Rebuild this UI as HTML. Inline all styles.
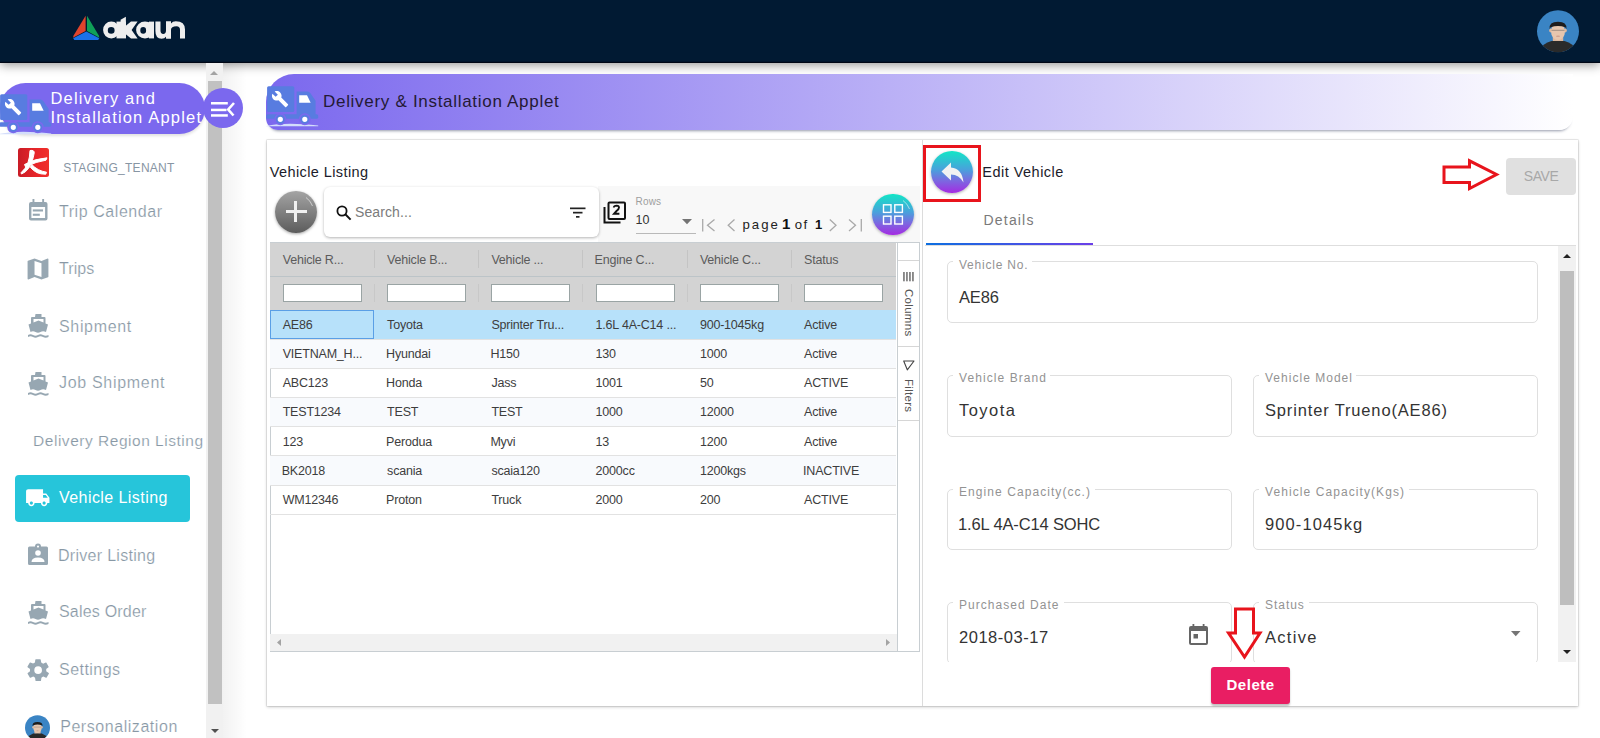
<!DOCTYPE html>
<html><head><meta charset="utf-8">
<style>
*{box-sizing:border-box;margin:0;padding:0}
html,body{width:1600px;height:738px;overflow:hidden;background:#fff;font-family:"Liberation Sans",sans-serif}
body{position:relative}
.a{position:absolute}
.t{position:absolute;white-space:nowrap;line-height:1}
svg{position:absolute;overflow:visible}
</style></head><body>
<!-- ================= HEADER ================= -->
<div class="a" style="left:0;top:0;width:1600px;height:62.6px;background:#011a33;box-shadow:inset 0 -1.2px 0 #000716,0 2px 10px rgba(0,0,0,.42)"></div>
<svg style="left:0;top:0" width="200" height="50" viewBox="0 0 200 50">
  <polygon points="85.6,15.8 85.6,31 73,37.8 73.6,35.6" fill="#e0442c"/>
  <polygon points="87,15.8 98.8,35.6 99.4,37.8 87,31" fill="#0fa058"/>
  <polygon points="73.2,38.3 86.3,31.4 99.3,38.3 98.2,40 74.3,40" fill="#1b72e8"/>
  <g fill="#eeeeee">
    <path fill-rule="evenodd" d="M111.3 21.6 A8.2 8.4 0 1 0 111.3 38.4 A8.2 8.4 0 1 0 111.3 21.6Z M111.2 27.1 A3.4 3.3 0 1 1 111.2 33.7 A3.4 3.3 0 1 1 111.2 27.1Z"/>
    <rect x="116.5" y="21.6" width="9.5" height="16.8"/>
    <polygon points="120.6,22 120.6,19.8 125.9,16.8 125.9,22"/>
    <polygon points="125.5,26 131,21.6 137.6,21.6 131.6,30 137.6,38.4 131,38.4 125.5,34"/>
    <path fill-rule="evenodd" d="M145 21.6 A8.9 8.4 0 1 0 145 38.4 A8.9 8.4 0 1 0 145 21.6Z M143.2 27.1 A2.9 3.3 0 1 1 143.2 33.7 A2.9 3.3 0 1 1 143.2 27.1Z"/>
    <rect x="149" y="21.6" width="5" height="16.8"/>
    <path d="M155.4 21.6 H160.5 V30.5 Q160.5 33.9 163.2 33.9 Q166 33.9 166 30.5 V21.6 H171 V38.4 H166.2 V36.6 Q164.6 38.8 161.6 38.8 Q155.4 38.8 155.4 31 Z"/>
    <path d="M166 38.4 V21.6 H171 V23.4 Q172.6 21.2 175.8 21.2 Q185 21.2 185 29.5 V38.4 H180 V29.8 Q180 26.2 176.5 26.2 Q171 26.2 171 29.8 V38.4 Z"/>
  </g>
</svg>
<svg style="left:1537px;top:9.5px" width="42" height="42.5" viewBox="0 0 42 42.5">
  <defs><clipPath id="avc"><circle cx="21" cy="21.25" r="21"/></clipPath></defs>
  <g id="avatar" clip-path="url(#avc)">
    <rect x="0" y="0" width="42" height="42.5" fill="#3a84c4"/>
    <ellipse cx="21" cy="44" rx="19" ry="13.8" fill="#2a2a2a"/>
    <rect x="15.8" y="24" width="10.4" height="7" fill="#dcb89f"/>
    <ellipse cx="13.8" cy="20.5" rx="1.6" ry="2" fill="#dcb89f"/>
    <ellipse cx="28.2" cy="20.5" rx="1.6" ry="2" fill="#dcb89f"/>
    <ellipse cx="21" cy="21.5" rx="7" ry="8.6" fill="#e6c6ae"/>
    <path d="M12.6 19 Q11.8 11.8 21 11.8 Q30.2 11.8 29.4 19 L28.3 17.2 Q21 14.8 13.7 17.2 Z" fill="#1d1d1d"/>
    <path d="M14.5 20.3 H27.5" stroke="#555" stroke-width=".7" opacity=".7"/>
    <ellipse cx="21" cy="26.3" rx="2.2" ry=".8" fill="#c9988a" opacity=".8"/>
  </g>
</svg>

<!-- ================= SIDEBAR ================= -->
<div class="a" style="left:223.3px;top:62px;width:24px;height:676px;background:linear-gradient(90deg,rgba(0,0,0,.05),rgba(0,0,0,0))"></div>
<div class="a" style="left:206px;top:63px;width:17.3px;height:675px;background:#f1f1f1"></div>
<div class="a" style="left:208px;top:81.2px;width:14px;height:622.6px;background:#c1c1c1"></div>
<svg style="left:209px;top:70px" width="10" height="6"><polygon points="1,5 5,1 9,5" fill="#a3a3a3"/></svg>
<svg style="left:210px;top:728px" width="10" height="6"><polygon points="1,1 5,5 9,1" fill="#505050"/></svg>

<div class="a" style="left:0;top:83px;width:205px;height:51px;background:#7b68ee;border-radius:26px;box-shadow:0 2px 3px rgba(0,0,0,.12)"></div>
<div class="a" style="left:203px;top:88.4px;width:40px;height:40px;background:#7b68ee;border-radius:50%"></div>
<svg style="left:211px;top:101px" width="25" height="17" viewBox="0 0 25 17">
  <rect x="0" y="1" width="16.8" height="2.5" fill="#fff"/>
  <rect x="0" y="7.7" width="15.5" height="2.5" fill="#fff"/>
  <rect x="0" y="13.2" width="16.8" height="2.5" fill="#fff"/>
  <path d="M23 2 L17.2 8.5 L22.5 14.5" fill="none" stroke="#fff" stroke-width="2.6"/>
</svg>
<!-- truck icon in pill -->
<svg style="left:-0.7px;top:94.4px" width="53" height="41" viewBox="0 0 53 41"><g id="truck">
  <path d="M0.3 40 Q20 35.5 52.2 39.6 L52.2 40.2 L0.3 40.2Z" fill="#d3ddfb"/>
  <rect x="1.1" y="0.3" width="27.2" height="25.8" rx="1.5" fill="#587ce0"/>
  <path d="M30.6 5.6 H41.5 Q43.3 5.6 44.4 7.2 L49.6 14.8 V30.5 H30.6 Z" fill="#587ce0"/>
  <rect x="0.3" y="28.3" width="51.9" height="4.5" rx="1.6" fill="#587ce0"/>
  <circle cx="14.3" cy="33.3" r="6" fill="#7b68ee"/>
  <circle cx="38.8" cy="33.3" r="6" fill="#7b68ee"/>
  <circle cx="14.3" cy="33.3" r="3.55" fill="#fff" stroke="#587ce0" stroke-width="1.9"/>
  <circle cx="38.8" cy="33.3" r="3.55" fill="#fff" stroke="#587ce0" stroke-width="1.9"/>
  <path d="M33.2 9.3 H41 L44.7 16.8 H33.2 Z" fill="#fff"/>
  <g transform="translate(5.2 4.2) scale(0.74)"><path d="M22.7 19l-9.1-9.1c.9-2.3.4-5-1.5-6.9-2-2-5-2.4-7.4-1.3L9 6 6 9 1.6 4.7C.4 7.1.9 10.1 2.9 12.1c1.9 1.9 4.6 2.4 6.9 1.5l9.1 9.1c.4.4 1 .4 1.4 0l2.3-2.3c.5-.4.5-1.1.1-1.4z" fill="#fff"/></g>
</g></svg>
<!-- tenant logo -->
<div class="a" style="left:18px;top:148.4px;width:31px;height:28.8px;background:linear-gradient(90deg,#c91c26,#e8262a 60%,#f0302a);border-radius:2.5px"></div>
<svg style="left:18px;top:148.4px" width="31" height="29" viewBox="0 0 31 29" fill="#fff" stroke="#fff" stroke-width="1" stroke-linejoin="round">
  <path d="M12 2.5 Q16.5 1.8 16.2 5 Q14.5 15 10.5 20.5 Q7.5 24.5 3.5 26 L3 24.8 Q7.5 21 10 14.5 Q11.8 9.5 12 2.5Z"/>
  <path d="M6.5 16.5 Q17 10.5 29 9.8 L28 12.2 Q18.5 13.5 7.5 18.8Z"/>
  <path d="M13.8 16.5 Q19.5 22.8 28.5 24.2 L27.8 26.2 Q18 26.5 12.3 19.2Z"/>
</svg>
<!-- menu icons -->
<svg style="left:28.5px;top:199px" width="19" height="22" viewBox="0 0 19 22" fill="#97a7b2">
  <path fill-rule="evenodd" d="M3.5 0 h1.9 v3 h7.8 v-3 h1.9 v3 h1.4 a2 2 0 0 1 2 2 v14.4 a2 2 0 0 1 -2 2 h-14.5 a2 2 0 0 1 -2 -2 v-14.4 a2 2 0 0 1 2 -2 h1.5z M2.4 8 v11.1 h13.7 v-11.1z"/>
  <rect x="3.8" y="10.4" width="10.2" height="2.1"/><rect x="3.8" y="14.7" width="7" height="2.1"/>
</svg>
<svg style="left:27px;top:258px" width="22" height="22" viewBox="2.5 2.5 19 19" fill="#97a7b2"><path d="M20.5 3l-.16.03L15 5.1 9 3 3.36 4.9c-.21.07-.36.25-.36.48V20.5c0 .28.22.5.5.5l.16-.03L9 18.9l6 2.1 5.64-1.9c.21-.07.36-.25.36-.48V3.5c0-.28-.22-.5-.5-.5zM15 19l-6-2.11V5l6 2.11V19z"/></svg>
<!-- ship icons -->
<svg style="left:27.5px;top:314px" width="21" height="24" viewBox="0 0 21 24" fill="#97a7b2"><path id="ship" d="M7.5 0 h6 v3 h3 a1 1 0 0 1 1 1 v5.5 l2.5 1 l-2 7.5 q-3 -1.5 -5.5 0 q-2.5 1.5 -5 0 q-2.5 -1.5 -5 0 l-2 -7.5 l2.5 -1 v-5.5 a1 1 0 0 1 1 -1 h3z M5.5 5 v3.5 l5 -2 l5 2 v-3.5z M0 21 q2.5 -1.6 5 0 q2.5 1.6 5 0 q2.5 -1.6 5 0 q2.5 1.6 5.5 0 v2 q-3 1.6 -5.5 0 q-2.5 -1.6 -5 0 q-2.5 1.6 -5 0 q-2.5 -1.6 -5 0z"/></svg>
<svg style="left:27.5px;top:372px" width="21" height="24" viewBox="0 0 21 24" fill="#97a7b2"><use href="#ship"/></svg>
<svg style="left:27.5px;top:601px" width="21" height="24" viewBox="0 0 21 24" fill="#97a7b2"><use href="#ship"/></svg>
<!-- active item -->
<div class="a" style="left:15px;top:475px;width:175px;height:47px;background:#26c5da;border-radius:4px"></div>
<svg style="left:25.1px;top:484.8px" width="25.5" height="25.5" viewBox="0 0 24 24" fill="#fff"><path d="M20 8h-3V4H3c-1.1 0-2 .9-2 2v11h2c0 1.66 1.34 3 3 3s3-1.34 3-3h6c0 1.66 1.34 3 3 3s3-1.34 3-3h2v-5l-3-4zM6 18.5c-.83 0-1.5-.67-1.5-1.5s.67-1.5 1.5-1.5 1.5.67 1.5 1.5-.67 1.5-1.5 1.5zm13.5-9l1.96 2.5H17V9.5h2.5zm-1.5 9c-.83 0-1.5-.67-1.5-1.5s.67-1.5 1.5-1.5 1.5.67 1.5 1.5-.67 1.5-1.5 1.5z"/></svg>
<!-- driver icon -->
<svg style="left:28px;top:544px" width="20" height="21" viewBox="0 0 20 21" fill="#97a7b2">
  <path d="M1.5 2.5 h5.5 a3 3 0 0 1 6 0 h5.5 a1.5 1.5 0 0 1 1.5 1.5 v15.5 a1.5 1.5 0 0 1 -1.5 1.5 h-17 a1.5 1.5 0 0 1 -1.5 -1.5 v-15.5 a1.5 1.5 0 0 1 1.5 -1.5z M10 1.5 a1 1 0 1 0 0.01 0z"/>
  <circle cx="10" cy="9" r="2.8" fill="#fff"/>
  <path d="M3.5 18 q0 -4.5 6.5 -4.5 q6.5 0 6.5 4.5z" fill="#fff"/>
</svg>
<!-- gear -->
<svg style="left:24.9px;top:657.3px" width="26.25" height="26.25" viewBox="0 0 24 24" fill="#97a7b2">
  <path d="M19.4 13a7.6 7.6 0 0 0 0-2l2.1-1.6a.5.5 0 0 0 .1-.6l-2-3.5a.5.5 0 0 0-.6-.2l-2.5 1a7.3 7.3 0 0 0-1.7-1L14.4 2.4a.5.5 0 0 0-.5-.4h-4a.5.5 0 0 0-.5.4L9.1 5a7.3 7.3 0 0 0-1.7 1l-2.5-1a.5.5 0 0 0-.6.2l-2 3.5a.5.5 0 0 0 .1.6L4.6 11a7.6 7.6 0 0 0 0 2l-2.1 1.6a.5.5 0 0 0-.1.6l2 3.5a.5.5 0 0 0 .6.2l2.5-1a7.3 7.3 0 0 0 1.7 1l.4 2.7a.5.5 0 0 0 .5.4h4a.5.5 0 0 0 .5-.4l.4-2.7a7.3 7.3 0 0 0 1.7-1l2.5 1a.5.5 0 0 0 .6-.2l2-3.5a.5.5 0 0 0-.1-.6zM12 15.5a3.5 3.5 0 1 1 0-7 3.5 3.5 0 0 1 0 7z"/>
</svg>
<!-- personalization avatar -->
<svg style="left:24.8px;top:715px" width="25" height="25.3" viewBox="0 0 42 42.5"><use href="#avatar"/></svg>

<!-- ================= MAIN ================= -->
<div class="a" style="left:266px;top:74px;width:1307px;height:56px;border-radius:28px 0 14px 12px;background:linear-gradient(90deg,#7b68ee 0%,#ffffff 100%);box-shadow:0 4px 3px -3px rgba(60,70,100,.55)"></div>
<!-- truck in applet header -->
<svg style="left:266px;top:86px" width="53" height="41" viewBox="0 0 53 41"><use href="#truck"/></svg>
<!-- card -->
<div class="a" style="left:266.5px;top:140px;width:1311.5px;height:566px;background:#fff;box-shadow:0 0 0 0.6px rgba(0,0,0,.12),0 1px 3px rgba(0,0,0,.22)"></div>

<!-- toolbar bg -->
<div class="a" style="left:598px;top:186px;width:322px;height:56px;background:#f8f8f8"></div>
<!-- add button -->
<div class="a" style="left:275px;top:191px;width:42px;height:42px;border-radius:50%;background:linear-gradient(180deg,#a4a4a4,#5c5c5c);box-shadow:0 1px 3px rgba(0,0,0,.35)"></div>
<div class="a" style="left:285.5px;top:210.2px;width:21px;height:3px;background:#f0f0f0"></div>
<div class="a" style="left:294.4px;top:201.2px;width:3px;height:21px;background:#f0f0f0"></div>
<!-- search box -->
<div class="a" style="left:324px;top:187px;width:275px;height:50px;background:#fff;border-radius:6px;box-shadow:0 1px 3px rgba(0,0,0,.3)"></div>
<svg style="left:336px;top:205px" width="16" height="16" viewBox="0 0 16 16"><circle cx="6" cy="6" r="4.6" fill="none" stroke="#111" stroke-width="1.8"/><path d="M9.3 9.3 L14.6 14.6" stroke="#111" stroke-width="2"/></svg>
<svg style="left:570px;top:207px" width="16" height="12" viewBox="0 0 16 12"><rect x="0" y="0.5" width="15.5" height="1.7" fill="#222"/><rect x="3" y="4.8" width="9.5" height="1.7" fill="#222"/><rect x="6" y="9" width="3.5" height="1.7" fill="#222"/></svg>
<!-- library books icon -->
<svg style="left:603px;top:201px" width="24" height="24" viewBox="0 0 24 24" fill="none" stroke="#111" stroke-width="2">
  <path d="M1.5 6 V21.5 H17.5"/>
  <rect x="5.5" y="1.5" width="16.5" height="16.5" rx="1"/>
  <path d="M10.8 6.5 Q11 4.6 13.6 4.6 Q16 4.7 16 6.5 Q16 8 13.5 10 L11 12.8 H16.4" stroke-width="1.9"/>
</svg>
<!-- rows select -->
<div class="a" style="left:635.5px;top:233.3px;width:60.5px;height:1px;background:#b9b9b9"></div>
<svg style="left:681.5px;top:218.5px" width="10" height="6"><polygon points="0,0 10,0 5,5.3" fill="#747474"/></svg>
<!-- pager icons -->
<svg style="left:702px;top:219px" width="160" height="13" viewBox="0 0 160 13" fill="none" stroke="#a9a9a9" stroke-width="1.3">
  <path d="M0.7 0 V12.5"/><path d="M12.5 0.5 L5.5 6.2 L12.5 12"/>
  <path d="M32.5 0.5 L26.2 6.2 L32.5 12"/>
  <path d="M127.8 0.5 L134 6.2 L127.8 12"/>
  <path d="M147 0.5 L153.5 6.2 L147 12"/><path d="M159.3 0 V12.5"/>
</svg>
<!-- grid toggle button -->
<div class="a" style="left:872px;top:193.5px;width:41.8px;height:41.8px;border-radius:50%;background:linear-gradient(180deg,#12e6c6 0%,#4aa0dc 45%,#7a6ae0 70%,#a42be2 100%);box-shadow:0 1px 3px rgba(0,0,0,.3)"></div>
<svg style="left:882px;top:203px" width="22" height="22" viewBox="0 0 22 22" fill="none" stroke="#fff" stroke-width="1.4">
  <rect x="1.5" y="1.8" width="7.5" height="7.6"/><rect x="12.8" y="1.8" width="7.6" height="7.6"/>
  <rect x="1.5" y="13.2" width="7.5" height="7.8"/><rect x="12.8" y="13.2" width="7.6" height="7.8"/>
</svg>
<svg style="left:872px;top:193.5px" width="42" height="42" viewBox="0 0 42 42" fill="none" stroke="rgba(255,255,255,.55)" stroke-width="1"><path d="M31 6.5 A17.5 17.5 0 0 1 37.5 15"/></svg>
<svg style="left:275px;top:191px" width="42" height="42" viewBox="0 0 42 42" fill="none" stroke="rgba(255,255,255,.55)" stroke-width="1"><path d="M31 6.5 A17.5 17.5 0 0 1 37.5 15"/></svg>
<svg style="left:931.3px;top:151.4px" width="42" height="42" viewBox="0 0 42 42" fill="none" stroke="rgba(255,255,255,.55)" stroke-width="1"><path d="M31 6.5 A17.5 17.5 0 0 1 37.5 15"/></svg>

<!-- grid -->
<div class="a" style="left:269.5px;top:242px;width:650px;height:410px;border:1px solid #c8ced2;background:#fff"></div>
<div class="a" style="left:270px;top:242.5px;width:626px;height:67.5px;background:#d3d3d3"></div>
<div class="a" style="left:270px;top:276px;width:626px;height:1px;background:#bcc4c8"></div>
<!-- header col separators -->
<div class="a" style="left:373.5px;top:250px;width:1px;height:18px;background:#c4c4c4"></div>
<div class="a" style="left:478px;top:250px;width:1px;height:18px;background:#c4c4c4"></div>
<div class="a" style="left:582.3px;top:250px;width:1px;height:18px;background:#c4c4c4"></div>
<div class="a" style="left:686.6px;top:250px;width:1px;height:18px;background:#c4c4c4"></div>
<div class="a" style="left:790.8px;top:250px;width:1px;height:18px;background:#c4c4c4"></div>
<div class="a" style="left:373.5px;top:284px;width:1px;height:18px;background:#c8c8c8"></div>
<div class="a" style="left:478px;top:284px;width:1px;height:18px;background:#c8c8c8"></div>
<div class="a" style="left:582.3px;top:284px;width:1px;height:18px;background:#c8c8c8"></div>
<div class="a" style="left:686.6px;top:284px;width:1px;height:18px;background:#c8c8c8"></div>
<div class="a" style="left:790.8px;top:284px;width:1px;height:18px;background:#c8c8c8"></div>
<!-- filter inputs -->
<div class="a" style="left:282.7px;top:283.7px;width:79px;height:18px;background:#fff;border:1px solid #9aa4a4"></div>
<div class="a" style="left:387.1px;top:283.7px;width:79px;height:18px;background:#fff;border:1px solid #9aa4a4"></div>
<div class="a" style="left:491.4px;top:283.7px;width:79px;height:18px;background:#fff;border:1px solid #9aa4a4"></div>
<div class="a" style="left:595.6px;top:283.7px;width:79px;height:18px;background:#fff;border:1px solid #9aa4a4"></div>
<div class="a" style="left:699.9px;top:283.7px;width:79px;height:18px;background:#fff;border:1px solid #9aa4a4"></div>
<div class="a" style="left:804.1px;top:283.7px;width:79px;height:18px;background:#fff;border:1px solid #9aa4a4"></div>
<!-- rows -->
<div class="a" style="left:270px;top:310px;width:626px;height:29px;background:#b7e1fa"></div>
<div class="a" style="left:270px;top:310px;width:104px;height:29px;border:1px solid #5a9fe6"></div>
<div class="a" style="left:270px;top:339px;width:626px;height:29px;background:#f8fafd"></div>
<div class="a" style="left:270px;top:397px;width:626px;height:29px;background:#f8fafd"></div>
<div class="a" style="left:270px;top:455.5px;width:626px;height:29.5px;background:#f8fafd"></div>
<div class="a" style="left:270px;top:338.5px;width:626px;height:1px;background:#e2e2e2"></div>
<div class="a" style="left:270px;top:367.7px;width:626px;height:1px;background:#e2e2e2"></div>
<div class="a" style="left:270px;top:396.9px;width:626px;height:1px;background:#e2e2e2"></div>
<div class="a" style="left:270px;top:426.1px;width:626px;height:1px;background:#e2e2e2"></div>
<div class="a" style="left:270px;top:455.3px;width:626px;height:1px;background:#e2e2e2"></div>
<div class="a" style="left:270px;top:484.5px;width:626px;height:1px;background:#e2e2e2"></div>
<div class="a" style="left:270px;top:513.7px;width:626px;height:1px;background:#e2e2e2"></div>
<!-- h scrollbar -->
<div class="a" style="left:270px;top:633.7px;width:627px;height:17.3px;background:#f1f1f1"></div>
<svg style="left:276px;top:638.5px" width="6" height="8"><polygon points="5,0 5,7 1,3.5" fill="#a3a3a3"/></svg>
<svg style="left:885px;top:638.5px" width="6" height="8"><polygon points="1,0 1,7 5,3.5" fill="#a3a3a3"/></svg>
<!-- side bar -->
<div class="a" style="left:896.5px;top:242.5px;width:1px;height:409px;background:#c8ced2"></div>
<div class="a" style="left:897.5px;top:260px;width:21.5px;height:1px;background:#d6d6d6"></div>
<div class="a" style="left:897.5px;top:346px;width:21.5px;height:1px;background:#d6d6d6"></div>
<div class="a" style="left:897.5px;top:420px;width:21.5px;height:1px;background:#d6d6d6"></div>
<svg style="left:903px;top:272px" width="11" height="10" viewBox="0 0 11 10" fill="#555"><rect x="0.3" y="0" width="1.3" height="9.3"/><rect x="3.3" y="0" width="1.3" height="9.3"/><rect x="6.3" y="0" width="1.3" height="9.3"/><rect x="9.3" y="0" width="1.3" height="9.3"/></svg>
<div class="t" style="left:913.8px;top:289px;font-size:11.5px;color:#555;transform-origin:0 0;transform:rotate(90deg);letter-spacing:.3px">Columns</div>
<svg style="left:903px;top:360px" width="12" height="11" viewBox="0 0 12 11" fill="none" stroke="#444" stroke-width="1.1" stroke-linejoin="round"><path d="M0.7 1 H11 L4.3 9.8 Z"/></svg>
<div class="t" style="left:913.8px;top:379px;font-size:11.5px;color:#555;transform-origin:0 0;transform:rotate(90deg);letter-spacing:.3px">Filters</div>

<!-- ================= RIGHT PANEL ================= -->
<div class="a" style="left:922px;top:140px;width:1px;height:566px;background:#dcdcdc"></div>
<div class="a" style="left:922.8px;top:145.2px;width:58.1px;height:56.9px;border:3.6px solid #e8141c"></div>
<div class="a" style="left:931.3px;top:151.4px;width:41.8px;height:41.8px;border-radius:50%;background:linear-gradient(180deg,#12e6c6 0%,#4aa0dc 45%,#7a6ae0 70%,#a42be2 100%);box-shadow:0 1px 3px rgba(0,0,0,.3)"></div>
<svg style="left:941px;top:162px" width="23" height="21" viewBox="0 0 23 21" fill="#f2f2f2"><path d="M0.5 9.5 L10 0.5 V5.6 Q21 6.5 22.5 20.5 Q18 12.8 10 12.6 V18.5 Z"/></svg>

<svg style="left:1442px;top:159px" width="58" height="32" viewBox="0 0 58 32" fill="none" stroke="#e8141c" stroke-width="3"><path d="M2 8 H27.5 V1.8 L54.5 15.5 L27.5 29.5 V23.5 H2 Z" stroke-linejoin="miter"/></svg>
<div class="a" style="left:1506px;top:158px;width:70px;height:37px;border-radius:4px;background:#e0e0e0"></div>

<!-- tabs -->
<div class="a" style="left:925px;top:245px;width:651px;height:1px;background:#dedede"></div>
<div class="a" style="left:925.5px;top:243px;width:167px;height:2.2px;background:linear-gradient(90deg,#0d6fe0,#6b3fe8)"></div>

<!-- form scroll -->
<div class="a" style="left:1558px;top:246px;width:17.5px;height:416px;background:#f1f1f1"></div>
<div class="a" style="left:1560.2px;top:271px;width:13.7px;height:334px;background:#bebebe"></div>
<svg style="left:1562px;top:253px" width="10" height="6"><polygon points="1,5 5,1 9,5" fill="#222"/></svg>
<svg style="left:1562px;top:649px" width="10" height="6"><polygon points="1,1 5,5 9,1" fill="#222"/></svg>

<!-- fields -->
<div style="position:absolute;left:930px;top:246px;width:628px;height:415.5px;overflow:hidden">
  <div class="a" style="left:16.5px;top:15.3px;width:591px;height:61.6px;border:1px solid #dfdfdf;border-radius:5px"></div>
  <div class="a" style="left:16.5px;top:129px;width:285px;height:61.8px;border:1px solid #dfdfdf;border-radius:5px"></div>
  <div class="a" style="left:322.5px;top:129px;width:285px;height:61.8px;border:1px solid #dfdfdf;border-radius:5px"></div>
  <div class="a" style="left:16.5px;top:242.7px;width:285px;height:61.6px;border:1px solid #dfdfdf;border-radius:5px"></div>
  <div class="a" style="left:322.5px;top:242.7px;width:285px;height:61.6px;border:1px solid #dfdfdf;border-radius:5px"></div>
  <div class="a" style="left:16.5px;top:356px;width:285px;height:61.6px;border:1px solid #dfdfdf;border-radius:5px"></div>
  <div class="a" style="left:322.5px;top:356px;width:285px;height:61.6px;border:1px solid #dfdfdf;border-radius:5px"></div>
</div>
<!-- label gaps -->
<div class="a" style="left:953px;top:258px;width:79px;height:6px;background:#fff"></div>
<div class="a" style="left:953px;top:372px;width:97px;height:6px;background:#fff"></div>
<div class="a" style="left:1259px;top:372px;width:97px;height:6px;background:#fff"></div>
<div class="a" style="left:953px;top:485px;width:142px;height:6px;background:#fff"></div>
<div class="a" style="left:1259px;top:485px;width:150px;height:6px;background:#fff"></div>
<div class="a" style="left:953px;top:599px;width:111px;height:6px;background:#fff"></div>
<div class="a" style="left:1259px;top:599px;width:50px;height:6px;background:#fff"></div>
<!-- calendar icon -->
<svg style="left:1188.5px;top:623.5px" width="19" height="21" viewBox="0 0 19 21" fill="#666">
  <path d="M3.5 0 h1.8 v2 h8.4 v-2 h1.8 v2 h1.5 a2 2 0 0 1 2 2 v15 a2 2 0 0 1 -2 2 h-15 a2 2 0 0 1 -2 -2 v-15 a2 2 0 0 1 2 -2 h1.5z M2 7 v12 h15 v-12z M4.5 10 h4.5 v4.5 h-4.5z"/>
</svg>
<svg style="left:1511px;top:630.5px" width="10" height="6"><polygon points="0,0 9.5,0 4.75,5.2" fill="#757575"/></svg>

<!-- red down arrow -->
<svg style="left:1226px;top:607px" width="37" height="52" viewBox="0 0 37 52" fill="none" stroke="#e8141c" stroke-width="3"><path d="M9.5 2 H27.5 V26 H34 L18.5 50 L2.5 26 H9.5 Z"/></svg>
<!-- delete button -->
<div class="a" style="left:1211px;top:666.5px;width:79px;height:37px;border-radius:3px;background:#e91e63;box-shadow:0 2px 2px rgba(0,0,0,.25)"></div>

<div class="t" style="left:50.50px;top:90.03px;font-size:16.5px;color:#ffffff;letter-spacing:1.152px;">Delivery and</div>
<div class="t" style="left:50.50px;top:108.63px;font-size:16.5px;color:#ffffff;letter-spacing:1.174px;">Installation Applet</div>
<div class="t" style="left:63.20px;top:161.54px;font-size:12px;color:#8795a3;letter-spacing:0.257px;">STAGING_TENANT</div>
<div class="t" style="left:59.00px;top:203.76px;font-size:16px;color:#8898a5;letter-spacing:0.558px;-webkit-text-stroke:0.2px #fff">Trip Calendar</div>
<div class="t" style="left:59.00px;top:260.76px;font-size:16px;color:#8898a5;letter-spacing:0.060px;-webkit-text-stroke:0.2px #fff">Trips</div>
<div class="t" style="left:59.00px;top:318.66px;font-size:16px;color:#8898a5;letter-spacing:0.665px;-webkit-text-stroke:0.2px #fff">Shipment</div>
<div class="t" style="left:59.00px;top:375.26px;font-size:16px;color:#8898a5;letter-spacing:0.692px;-webkit-text-stroke:0.2px #fff">Job Shipment</div>
<div class="t" style="left:33.10px;top:432.88px;font-size:15.5px;color:#8898a5;letter-spacing:0.518px;-webkit-text-stroke:0.2px #fff">Delivery Region Listing</div>
<div class="t" style="left:58.00px;top:547.66px;font-size:16px;color:#8898a5;letter-spacing:0.295px;-webkit-text-stroke:0.2px #fff">Driver Listing</div>
<div class="t" style="left:59.00px;top:603.86px;font-size:16px;color:#8898a5;letter-spacing:0.196px;-webkit-text-stroke:0.2px #fff">Sales Order</div>
<div class="t" style="left:59.00px;top:661.66px;font-size:16px;color:#8898a5;letter-spacing:0.455px;-webkit-text-stroke:0.2px #fff">Settings</div>
<div class="t" style="left:60.20px;top:719.16px;font-size:16px;color:#8898a5;letter-spacing:0.550px;-webkit-text-stroke:0.2px #fff">Personalization</div>
<div class="t" style="left:59.00px;top:490.36px;font-size:16px;color:#ffffff;font-weight:500;letter-spacing:0.436px;">Vehicle Listing</div>
<div class="t" style="left:323.00px;top:93.21px;font-size:17px;color:#241a35;letter-spacing:0.701px;">Delivery &amp; Installation Applet</div>
<div class="t" style="left:269.80px;top:164.73px;font-size:14.5px;color:#1c1c2a;font-weight:500;letter-spacing:0.397px;">Vehicle Listing</div>
<div class="t" style="left:355.00px;top:205.15px;font-size:14px;color:#7b7b7b;letter-spacing:0.108px;">Search...</div>
<div class="t" style="left:635.60px;top:196.94px;font-size:10px;color:#9e9e9e;letter-spacing:0.132px;">Rows</div>
<div class="t" style="left:635.60px;top:214.17px;font-size:12.5px;color:#333333;">10</div>
<div class="t" style="left:742.50px;top:217.63px;font-size:13.2px;color:#222222;letter-spacing:1.999px;">page</div>
<div class="t" style="left:782.00px;top:216.10px;font-size:15px;color:#111111;font-weight:700;letter-spacing:-2.800px;">1</div>
<div class="t" style="left:794.75px;top:217.63px;font-size:13.2px;color:#222222;letter-spacing:1.416px;">of</div>
<div class="t" style="left:815.00px;top:217.80px;font-size:13px;color:#111111;font-weight:700;letter-spacing:-2.200px;">1</div>
<div class="t" style="left:982.30px;top:164.83px;font-size:14.5px;color:#1c1c2a;font-weight:500;letter-spacing:0.481px;">Edit Vehicle</div>
<div class="t" style="left:983.60px;top:213.05px;font-size:14px;color:#7a7a7a;font-weight:500;letter-spacing:1.168px;">Details</div>
<div class="t" style="left:1523.70px;top:169.45px;font-size:14px;color:#a8a8a8;font-weight:500;letter-spacing:-0.358px;">SAVE</div>
<div class="t" style="left:1226.50px;top:677.30px;font-size:15px;color:#ffffff;font-weight:700;letter-spacing:0.514px;">Delete</div>
<div class="t" style="left:282.70px;top:253.52px;font-size:12.5px;color:#5b5b5b;letter-spacing:-0.2px">Vehicle R...</div>
<div class="t" style="left:387.10px;top:253.52px;font-size:12.5px;color:#5b5b5b;letter-spacing:-0.2px">Vehicle B...</div>
<div class="t" style="left:491.40px;top:253.52px;font-size:12.5px;color:#5b5b5b;letter-spacing:-0.2px">Vehicle ...</div>
<div class="t" style="left:594.60px;top:253.52px;font-size:12.5px;color:#5b5b5b;letter-spacing:-0.2px">Engine C...</div>
<div class="t" style="left:699.90px;top:253.52px;font-size:12.5px;color:#5b5b5b;letter-spacing:-0.2px">Vehicle C...</div>
<div class="t" style="left:804.10px;top:253.52px;font-size:12.5px;color:#5b5b5b;letter-spacing:-0.2px">Status</div>
<div class="t" style="left:282.70px;top:318.82px;font-size:12.5px;color:#3d3d3d;letter-spacing:-0.2px">AE86</div>
<div class="t" style="left:387.10px;top:318.82px;font-size:12.5px;color:#3d3d3d;letter-spacing:-0.2px">Toyota</div>
<div class="t" style="left:491.40px;top:318.82px;font-size:12.5px;color:#3d3d3d;letter-spacing:-0.2px">Sprinter Tru...</div>
<div class="t" style="left:595.60px;top:318.82px;font-size:12.5px;color:#3d3d3d;letter-spacing:-0.2px">1.6L 4A-C14 ...</div>
<div class="t" style="left:699.90px;top:318.82px;font-size:12.5px;color:#3d3d3d;letter-spacing:-0.2px">900-1045kg</div>
<div class="t" style="left:804.10px;top:318.82px;font-size:12.5px;color:#3d3d3d;letter-spacing:-0.2px">Active</div>
<div class="t" style="left:282.70px;top:348.02px;font-size:12.5px;color:#3d3d3d;letter-spacing:-0.2px">VIETNAM_H...</div>
<div class="t" style="left:386.10px;top:348.02px;font-size:12.5px;color:#3d3d3d;letter-spacing:-0.2px">Hyundai</div>
<div class="t" style="left:490.40px;top:348.02px;font-size:12.5px;color:#3d3d3d;letter-spacing:-0.2px">H150</div>
<div class="t" style="left:595.60px;top:348.02px;font-size:12.5px;color:#3d3d3d;letter-spacing:-0.2px">130</div>
<div class="t" style="left:699.90px;top:348.02px;font-size:12.5px;color:#3d3d3d;letter-spacing:-0.2px">1000</div>
<div class="t" style="left:804.10px;top:348.02px;font-size:12.5px;color:#3d3d3d;letter-spacing:-0.2px">Active</div>
<div class="t" style="left:282.70px;top:377.22px;font-size:12.5px;color:#3d3d3d;letter-spacing:-0.2px">ABC123</div>
<div class="t" style="left:386.10px;top:377.22px;font-size:12.5px;color:#3d3d3d;letter-spacing:-0.2px">Honda</div>
<div class="t" style="left:491.40px;top:377.22px;font-size:12.5px;color:#3d3d3d;letter-spacing:-0.2px">Jass</div>
<div class="t" style="left:595.60px;top:377.22px;font-size:12.5px;color:#3d3d3d;letter-spacing:-0.2px">1001</div>
<div class="t" style="left:699.90px;top:377.22px;font-size:12.5px;color:#3d3d3d;letter-spacing:-0.2px">50</div>
<div class="t" style="left:804.10px;top:377.22px;font-size:12.5px;color:#3d3d3d;letter-spacing:-0.2px">ACTIVE</div>
<div class="t" style="left:282.70px;top:406.42px;font-size:12.5px;color:#3d3d3d;letter-spacing:-0.2px">TEST1234</div>
<div class="t" style="left:387.10px;top:406.42px;font-size:12.5px;color:#3d3d3d;letter-spacing:-0.2px">TEST</div>
<div class="t" style="left:491.40px;top:406.42px;font-size:12.5px;color:#3d3d3d;letter-spacing:-0.2px">TEST</div>
<div class="t" style="left:595.60px;top:406.42px;font-size:12.5px;color:#3d3d3d;letter-spacing:-0.2px">1000</div>
<div class="t" style="left:699.90px;top:406.42px;font-size:12.5px;color:#3d3d3d;letter-spacing:-0.2px">12000</div>
<div class="t" style="left:804.10px;top:406.42px;font-size:12.5px;color:#3d3d3d;letter-spacing:-0.2px">Active</div>
<div class="t" style="left:282.70px;top:435.62px;font-size:12.5px;color:#3d3d3d;letter-spacing:-0.2px">123</div>
<div class="t" style="left:386.10px;top:435.62px;font-size:12.5px;color:#3d3d3d;letter-spacing:-0.2px">Perodua</div>
<div class="t" style="left:490.40px;top:435.62px;font-size:12.5px;color:#3d3d3d;letter-spacing:-0.2px">Myvi</div>
<div class="t" style="left:595.60px;top:435.62px;font-size:12.5px;color:#3d3d3d;letter-spacing:-0.2px">13</div>
<div class="t" style="left:699.90px;top:435.62px;font-size:12.5px;color:#3d3d3d;letter-spacing:-0.2px">1200</div>
<div class="t" style="left:804.10px;top:435.62px;font-size:12.5px;color:#3d3d3d;letter-spacing:-0.2px">Active</div>
<div class="t" style="left:281.70px;top:464.82px;font-size:12.5px;color:#3d3d3d;letter-spacing:-0.2px">BK2018</div>
<div class="t" style="left:387.10px;top:464.82px;font-size:12.5px;color:#3d3d3d;letter-spacing:-0.2px">scania</div>
<div class="t" style="left:491.40px;top:464.82px;font-size:12.5px;color:#3d3d3d;letter-spacing:-0.2px">scaia120</div>
<div class="t" style="left:595.60px;top:464.82px;font-size:12.5px;color:#3d3d3d;letter-spacing:-0.2px">2000cc</div>
<div class="t" style="left:699.90px;top:464.82px;font-size:12.5px;color:#3d3d3d;letter-spacing:-0.2px">1200kgs</div>
<div class="t" style="left:803.10px;top:464.82px;font-size:12.5px;color:#3d3d3d;letter-spacing:-0.2px">INACTIVE</div>
<div class="t" style="left:282.70px;top:494.02px;font-size:12.5px;color:#3d3d3d;letter-spacing:-0.2px">WM12346</div>
<div class="t" style="left:386.10px;top:494.02px;font-size:12.5px;color:#3d3d3d;letter-spacing:-0.2px">Proton</div>
<div class="t" style="left:491.40px;top:494.02px;font-size:12.5px;color:#3d3d3d;letter-spacing:-0.2px">Truck</div>
<div class="t" style="left:595.60px;top:494.02px;font-size:12.5px;color:#3d3d3d;letter-spacing:-0.2px">2000</div>
<div class="t" style="left:699.90px;top:494.02px;font-size:12.5px;color:#3d3d3d;letter-spacing:-0.2px">200</div>
<div class="t" style="left:804.10px;top:494.02px;font-size:12.5px;color:#3d3d3d;letter-spacing:-0.2px">ACTIVE</div>
<div class="t" style="left:959.00px;top:258.54px;font-size:12px;color:#939393;letter-spacing:0.783px;">Vehicle No.</div>
<div class="t" style="left:959.00px;top:288.73px;font-size:16.5px;color:#333333;letter-spacing:-0.162px;">AE86</div>
<div class="t" style="left:959.00px;top:372.24px;font-size:12px;color:#939393;letter-spacing:1.077px;">Vehicle Brand</div>
<div class="t" style="left:959.00px;top:402.43px;font-size:16.5px;color:#333333;letter-spacing:1.453px;">Toyota</div>
<div class="t" style="left:1265.00px;top:372.24px;font-size:12px;color:#939393;letter-spacing:1.021px;">Vehicle Model</div>
<div class="t" style="left:1265.00px;top:402.43px;font-size:16.5px;color:#333333;letter-spacing:0.846px;">Sprinter Trueno(AE86)</div>
<div class="t" style="left:959.00px;top:485.94px;font-size:12px;color:#939393;letter-spacing:1.068px;">Engine Capacity(cc.)</div>
<div class="t" style="left:958.00px;top:516.13px;font-size:16.5px;color:#333333;letter-spacing:-0.139px;">1.6L 4A-C14 SOHC</div>
<div class="t" style="left:1265.00px;top:485.94px;font-size:12px;color:#939393;letter-spacing:1.080px;">Vehicle Capacity(Kgs)</div>
<div class="t" style="left:1265.00px;top:516.13px;font-size:16.5px;color:#333333;letter-spacing:1.113px;">900-1045kg</div>
<div class="t" style="left:959.00px;top:599.24px;font-size:12px;color:#939393;letter-spacing:1.033px;">Purchased Date</div>
<div class="t" style="left:959.00px;top:629.43px;font-size:16.5px;color:#333333;letter-spacing:0.531px;">2018-03-17</div>
<div class="t" style="left:1265.00px;top:599.24px;font-size:12px;color:#939393;letter-spacing:0.956px;">Status</div>
<div class="t" style="left:1265.00px;top:629.43px;font-size:16.5px;color:#333333;letter-spacing:1.289px;">Active</div>
</body></html>
